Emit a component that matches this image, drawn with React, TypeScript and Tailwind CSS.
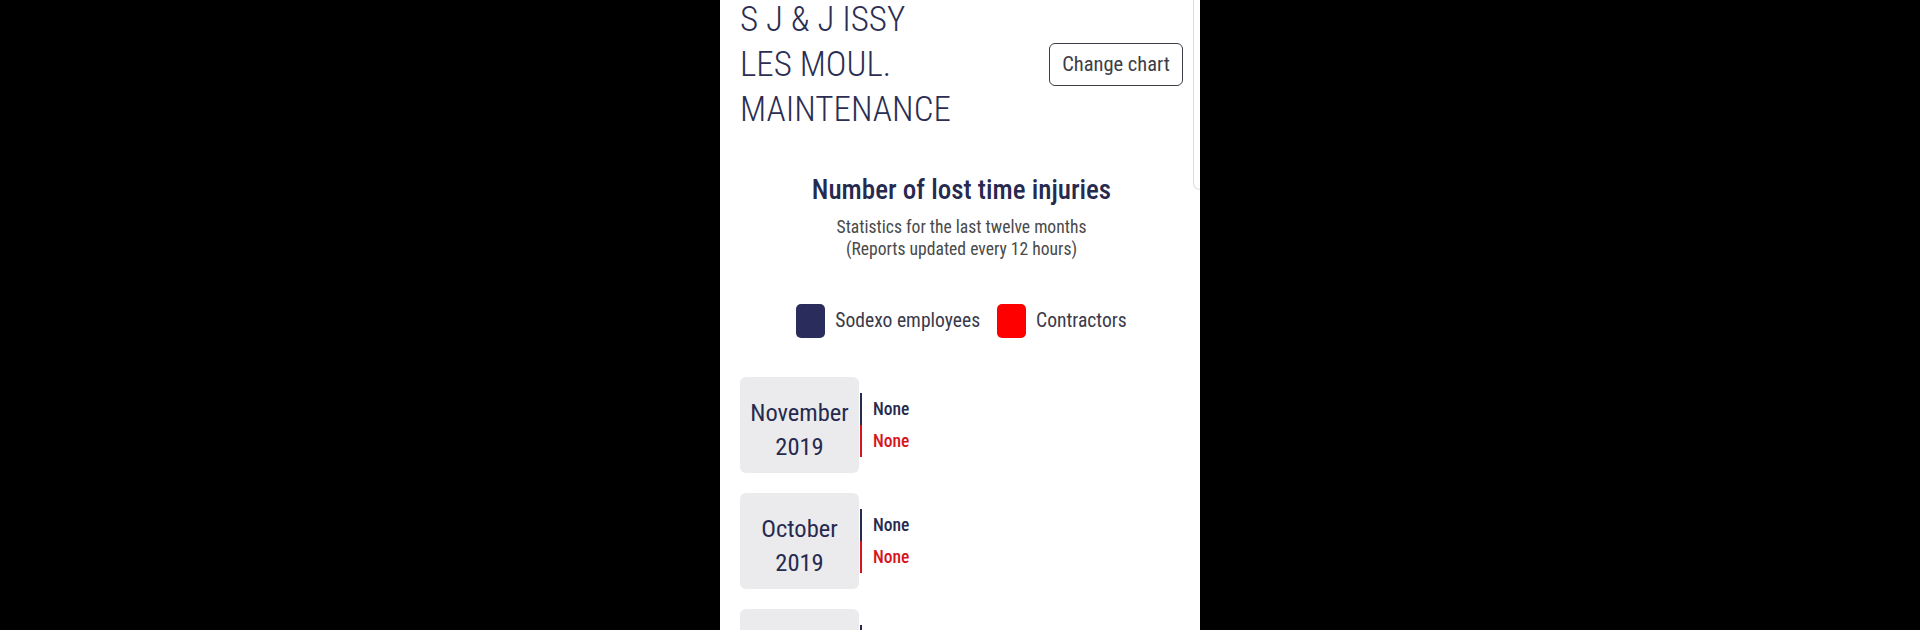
function MonthCard({ month, year }: { month: string; year: string }) {
  return (
    <div className="flex items-center">
      <div className="flex h-[96px] w-[119px] flex-col items-center justify-center rounded-md bg-[#ebebed] pt-[9px] text-[24.5px] leading-[34px] font-normal text-[#272a4f]">
        <span>{month}</span>
        <span>{year}</span>
      </div>
      <div className="ml-px flex flex-col text-[17.5px] leading-[32px] font-medium">
        <span className="border-l-2 border-[#272a4f] pl-[11px] text-[#272a4f]">None</span>
        <span className="border-l-2 border-[#d7141e] pl-[11px] text-[#d7141e]">None</span>
      </div>
    </div>
  )
}

export default function App() {
  return (
    <div className="flex h-[630px] w-full justify-center overflow-hidden bg-black">
      <div className="relative w-[480px] bg-white pl-[20px] pr-[17px] font-['Roboto',sans-serif] [font-stretch:75%]">
        <div className="-mt-[3px] flex items-center justify-between">
          <h1 className="text-[35px] leading-[45px] font-light text-[#2b2d52]">
            S J &amp; J ISSY
            <br />
            LES MOUL.
            <br />
            MAINTENANCE
          </h1>
          <button
            type="button"
            className="h-[43px] w-[134px] whitespace-nowrap rounded-md border-[1.5px] border-[#3d3d45] text-[20.5px] font-normal text-[#3d3d45]"
          >
            Change chart
          </button>
        </div>

        <div className="mt-[41px] flex flex-col items-center text-center">
          <h2 className="text-[27px] leading-[34px] font-medium text-[#272a4f]">
            Number of lost time injuries
          </h2>
          <p className="mt-[9px] text-[17.6px] leading-[22px] text-[#4a4a4a]">
            Statistics for the last twelve months
            <br />
            (Reports updated every 12 hours)
          </p>
        </div>

        <div className="mt-[44px] flex items-center justify-center gap-[10px] text-[19.6px] leading-[24px] text-[#3a3a4a]">
          <span className="h-[34px] w-[29px] rounded-[5px] bg-[#2a2d5c]" />
          <span className="mr-[7px]">Sodexo employees</span>
          <span className="h-[34px] w-[29px] rounded-[5px] bg-[#ff0000]" />
          <span>Contractors</span>
        </div>

        <div className="mt-[39px] flex flex-col gap-[20px]">
          <MonthCard month="November" year="2019" />
          <MonthCard month="October" year="2019" />
          <MonthCard month="September" year="2019" />
        </div>

        {/* scrollbar thumb edge */}
        <div className="absolute right-0 top-[-10px] h-[200px] w-[7px] rounded-bl-[8px] border-b border-l border-[#dcdcdc]" />
      </div>
    </div>
  )
}
